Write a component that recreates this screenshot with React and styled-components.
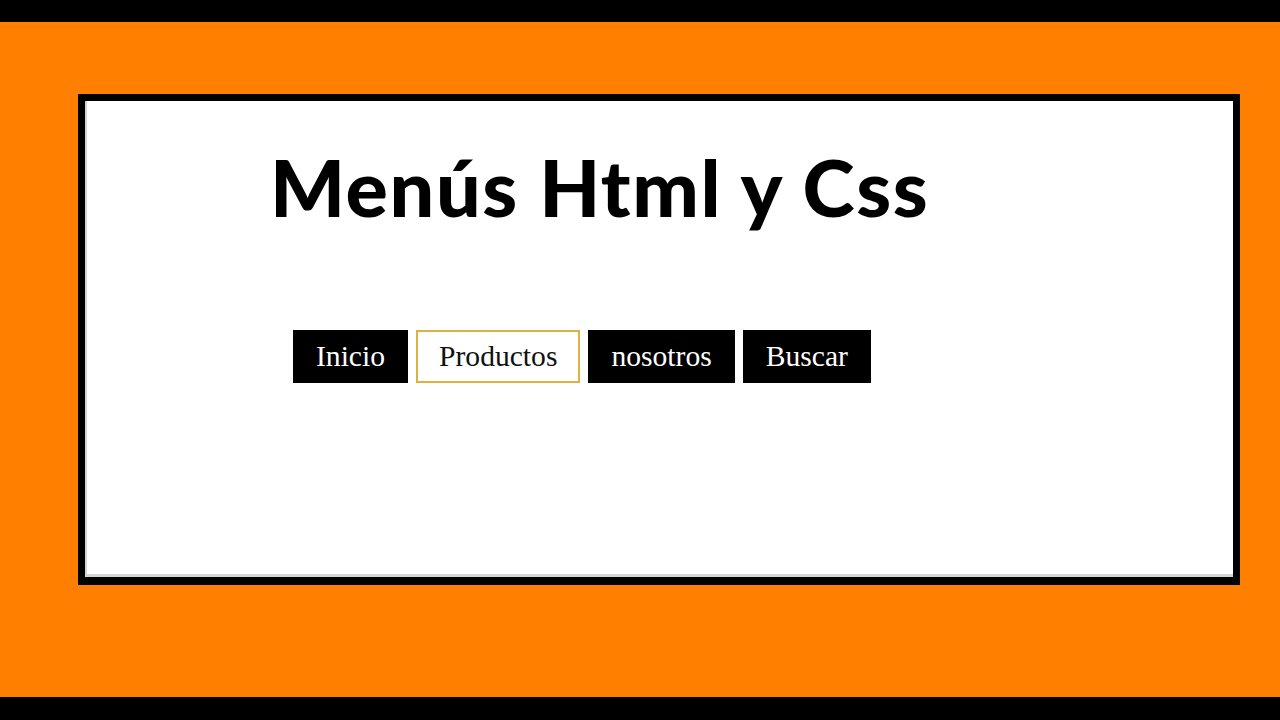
import React from "react";
import styled, { createGlobalStyle } from "styled-components";

const GlobalStyle = createGlobalStyle`
  html, body {
    margin: 0;
    padding: 0;
    background: #000;
  }
`;

const items = [
  { label: "Inicio" },
  { label: "Productos", active: true },
  { label: "nosotros" },
  { label: "Buscar" },
];

const App = () => {
  return (
    <>
      <GlobalStyle />
      <Screen>
        <Stage>
          <Frame>
            <Title>Menús Html y Css</Title>
            <Menu>
              {items.map((item) => (
                <MenuItem key={item.label} $active={item.active}>
                  {item.label}
                </MenuItem>
              ))}
            </Menu>
          </Frame>
        </Stage>
      </Screen>
    </>
  );
};

const Screen = styled.div`
  width: 1280px;
  height: 720px;
  padding: 22px 0 23px;
  box-sizing: border-box;
  background: #000;
`;

const Stage = styled.div`
  height: 100%;
  background: #ff8000;
  padding: 72px 40px 0 78px;
  box-sizing: border-box;
`;

const Frame = styled.div`
  width: 1162px;
  height: 491px;
  box-sizing: border-box;
  border: 7px solid #000;
  border-bottom-width: 8px;
  background: #fff;
  padding: 36px 0 0 185px;
  box-shadow: inset 2px -3px 0 #d4d4d4;
`;

const Title = styled.h1`
  margin: 0;
  font-family: Lato, "Open Sans", sans-serif;
  font-weight: 900;
  font-size: 79px;
  line-height: 100px;
  color: #000;
  letter-spacing: 1.6px;
`;

const Menu = styled.nav`
  display: flex;
  gap: 8px;
  margin: 93px 0 0 23px;
`;

const MenuItem = styled.a`
  height: 53px;
  box-sizing: border-box;
  padding: 0 21px;
  display: flex;
  align-items: center;
  font-family: "Liberation Serif", "Times New Roman", serif;
  font-size: 29.6px;
  color: ${(p) => (p.$active ? "#111" : "#fff")};
  background: ${(p) => (p.$active ? "#fff" : "#000")};
  border: 2px solid ${(p) => (p.$active ? "#e0b040" : "#000")};
  cursor: pointer;
`;

export default App;
